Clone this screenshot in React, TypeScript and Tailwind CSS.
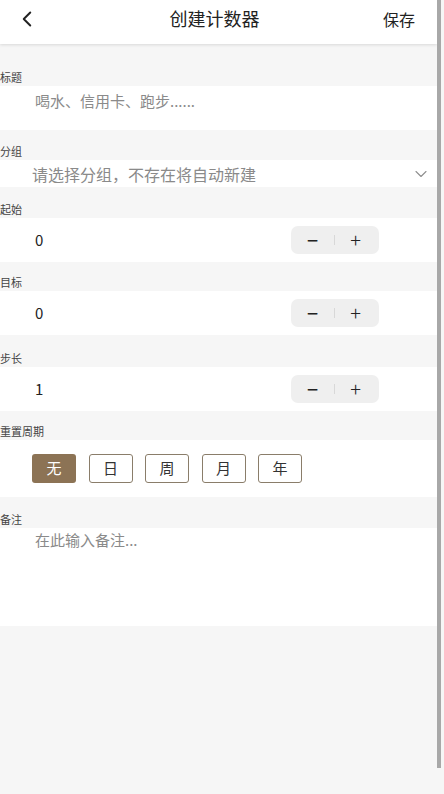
import { ChevronLeft, ChevronDown } from "lucide-react";

const font = { fontFamily: '"Noto Sans CJK SC", "Noto Sans", sans-serif' };

const cycles = ["无", "日", "周", "月", "年"];

const SectionLabel = ({ text, h }: { text: string; h: string }) => (
  <div className={`${h} flex items-end pb-[3px] text-[11px] leading-none text-[#444]`}>
    {text}
  </div>
);

const Stepper = () => (
  <div className="flex h-[28px] w-[88px] items-center justify-between rounded-[7px] bg-[#efefef] pl-[16px] pr-[18px] text-[#222]">
    <span className="text-[20px] leading-none">−</span>
    <span className="h-[10px] w-px bg-[#d8d8d8]" />
    <span className="text-[20px] font-light leading-none">+</span>
  </div>
);

const NumberRow = ({ value }: { value: string }) => (
  <div className="flex h-[44px] items-center justify-between bg-white pl-[35px] pr-[58px]">
    <span className="text-[15px] text-[#222]">{value}</span>
    <Stepper />
  </div>
);

export default function App() {
  return (
    <div className="flex min-h-[794px] w-[444px] bg-[#f6f6f6]" style={font}>
      <div className="flex w-[437px] flex-col">
        <header className="flex h-[44px] items-center justify-between bg-white pb-[7px] pl-[14px] pr-[22px] shadow-[0_1px_3px_rgba(0,0,0,0.12)]">
          <ChevronLeft size={26} strokeWidth={1.8} className="text-[#222]" />
          <h1 className="ml-[6px] text-[18px] text-[#222]">创建计数器</h1>
          <button className="text-[16px] text-[#222]">保存</button>
        </header>

        <SectionLabel text="标题" h="h-[42px]" />
        <div className="flex h-[44px] items-start bg-white pl-[35px] pt-[4px] text-[15px] text-[#8a8a8a]">
          喝水、信用卡、跑步......
        </div>

        <SectionLabel text="分组" h="h-[30px]" />
        <div className="flex h-[27px] items-center justify-between bg-white pl-[32px] pr-[6px] text-[16px] text-[#8a8a8a]">
          <span>请选择分组，不存在将自动新建</span>
          <ChevronDown size={20} strokeWidth={1.3} className="text-[#8f8f8f]" />
        </div>

        <SectionLabel text="起始" h="h-[31px]" />
        <NumberRow value="0" />

        <SectionLabel text="目标" h="h-[29px]" />
        <NumberRow value="0" />

        <SectionLabel text="步长" h="h-[32px]" />
        <NumberRow value="1" />

        <SectionLabel text="重置周期" h="h-[29px]" />
        <div className="flex h-[57px] items-center gap-[12.5px] bg-white pl-[32px]">
          {cycles.map((c, i) => (
            <button
              key={c}
              className={
                i === 0
                  ? "flex h-[29px] w-[44px] items-center justify-center rounded-[3px] bg-[#8c7355] text-[15px] text-white"
                  : "flex h-[29px] w-[44px] items-center justify-center rounded-[3px] border-[1.5px] border-[#8a7d6a] bg-white text-[15px] text-[#333]"
              }
            >
              {c}
            </button>
          ))}
        </div>

        <SectionLabel text="备注" h="h-[31px]" />
        <div className="h-[98px] bg-white pl-[35px] pt-[1px] text-[15px] text-[#8a8a8a]">
          在此输入备注...
        </div>
      </div>
      <div className="w-[7px]">
        <div className="h-[768px] w-[4px] bg-[#a8a8a8]" />
      </div>
    </div>
  );
}
